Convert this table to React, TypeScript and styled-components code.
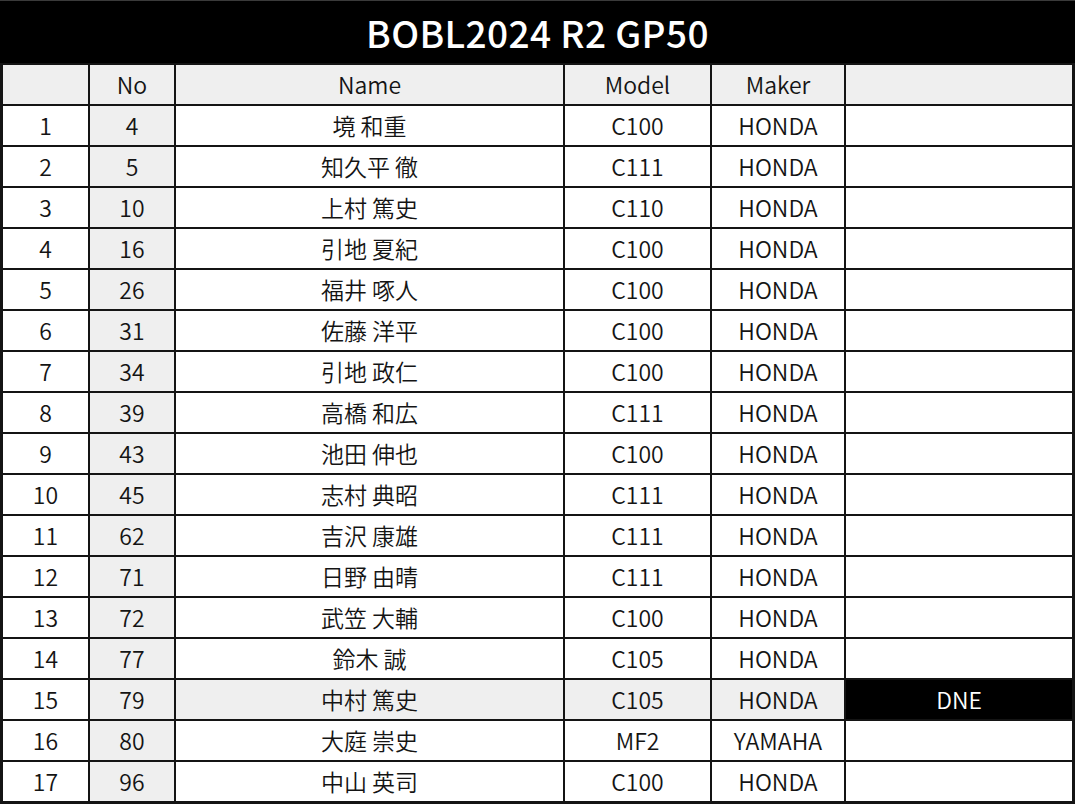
import { createGlobalStyle } from 'styled-components'
import styled from 'styled-components'

const GlobalStyle = createGlobalStyle`
  html, body {
    margin: 0;
    padding: 0;
    background: #fff;
  }
  body {
    font-family: "Noto Sans CJK JP", "Noto Sans", sans-serif;
    color: #1a1a1a;
  }
`

const Board = styled.div`
  width: 1075px;
  box-sizing: border-box;
  background: #141414;
  padding: 0 3px 3px 3px;
  display: grid;
  grid-template-columns: 85px 84px 387px 145px 132px 1fr;
  grid-template-rows: 63px;
  grid-auto-rows: 39px;
  gap: 2px;
`

const Title = styled.h1`
  grid-column: 1 / -1;
  margin: 0 -3px;
  background: #000;
  border-top: 1px solid #3a3a3a;
  color: #fff;
  font-size: 37px;
  font-weight: 500;
  letter-spacing: 0.4px;
  line-height: 1;
  display: flex;
  align-items: center;
  justify-content: center;
  padding-top: 1px;
`

const Cell = styled.div<{ $tone?: 'white' | 'grey' | 'black' }>`
  background: ${(p) =>
    p.$tone === 'grey' ? '#efefef' : p.$tone === 'black' ? '#000' : '#fff'};
  color: ${(p) => (p.$tone === 'black' ? '#fff' : '#141414')};
  display: flex;
  align-items: center;
  justify-content: center;
  font-size: 23px;
  font-weight: 350;
  line-height: 1;
  padding-bottom: 1px;
`

type Rider = {
  no: number
  name: string
  model: string
  maker: string
  note?: string
}

const riders: Rider[] = [
  { no: 4, name: '境 和重', model: 'C100', maker: 'HONDA' },
  { no: 5, name: '知久平 徹', model: 'C111', maker: 'HONDA' },
  { no: 10, name: '上村 篤史', model: 'C110', maker: 'HONDA' },
  { no: 16, name: '引地 夏紀', model: 'C100', maker: 'HONDA' },
  { no: 26, name: '福井 啄人', model: 'C100', maker: 'HONDA' },
  { no: 31, name: '佐藤 洋平', model: 'C100', maker: 'HONDA' },
  { no: 34, name: '引地 政仁', model: 'C100', maker: 'HONDA' },
  { no: 39, name: '高橋 和広', model: 'C111', maker: 'HONDA' },
  { no: 43, name: '池田 伸也', model: 'C100', maker: 'HONDA' },
  { no: 45, name: '志村 典昭', model: 'C111', maker: 'HONDA' },
  { no: 62, name: '吉沢 康雄', model: 'C111', maker: 'HONDA' },
  { no: 71, name: '日野 由晴', model: 'C111', maker: 'HONDA' },
  { no: 72, name: '武笠 大輔', model: 'C100', maker: 'HONDA' },
  { no: 77, name: '鈴木 誠', model: 'C105', maker: 'HONDA' },
  { no: 79, name: '中村 篤史', model: 'C105', maker: 'HONDA', note: 'DNE' },
  { no: 80, name: '大庭 崇史', model: 'MF2', maker: 'YAMAHA' },
  { no: 96, name: '中山 英司', model: 'C100', maker: 'HONDA' },
]

const App = () => {
  return (
    <>
      <GlobalStyle />
      <Board>
        <Title>BOBL2024 R2 GP50</Title>
        <Cell $tone="grey" />
        <Cell $tone="grey">No</Cell>
        <Cell $tone="grey">Name</Cell>
        <Cell $tone="grey">Model</Cell>
        <Cell $tone="grey">Maker</Cell>
        <Cell $tone="grey" />
        {riders.map((r, i) => {
          const tone = r.note ? 'grey' : 'white'
          return [
            <Cell key={`p${i}`}>{i + 1}</Cell>,
            <Cell key={`n${i}`} $tone="grey">
              {r.no}
            </Cell>,
            <Cell key={`m${i}`} $tone={tone}>
              {r.name}
            </Cell>,
            <Cell key={`o${i}`} $tone={tone}>
              {r.model}
            </Cell>,
            <Cell key={`k${i}`} $tone={tone}>
              {r.maker}
            </Cell>,
            <Cell key={`x${i}`} $tone={r.note ? 'black' : 'white'}>
              {r.note}
            </Cell>,
          ]
        })}
      </Board>
    </>
  )
}

export default App
